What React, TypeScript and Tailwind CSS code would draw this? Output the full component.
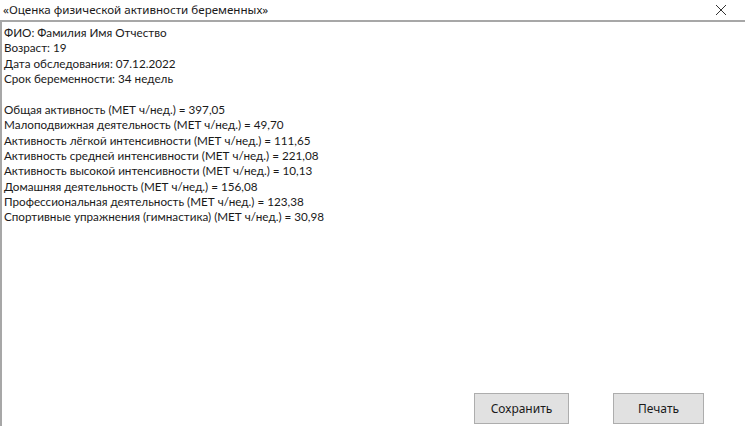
import React from "react";

const info = [
  "ФИО: Фамилия Имя Отчество",
  "Возраст: 19",
  "Дата обследования: 07.12.2022",
  "Срок беременности: 34 недель",
];

const results = [
  "Общая активность (МЕТ ч/нед.) = 397,05",
  "Малоподвижная деятельность (МЕТ ч/нед.) = 49,70",
  "Активность лёгкой интенсивности (МЕТ ч/нед.) = 111,65",
  "Активность средней интенсивности (МЕТ ч/нед.) = 221,08",
  "Активность высокой интенсивности (МЕТ ч/нед.) = 10,13",
  "Домашняя деятельность (МЕТ ч/нед.) = 156,08",
  "Профессиональная деятельность (МЕТ ч/нед.) = 123,38",
  "Спортивные упражнения (гимнастика) (МЕТ ч/нед.) = 30,98",
];

export default function App() {
  return (
    <div className="w-[745px] h-[426px] bg-white flex flex-col text-[#1a1a1a] font-['Noto_Sans',sans-serif] overflow-hidden">
      <div className="h-[22px] flex items-center justify-between pl-[3px] pr-[18px] border-b-2 border-[#a7a7a7] text-[11.6px]">
        <span>«Оценка физической активности беременных»</span>
        <svg width="12" height="12" viewBox="0 0 12 12" className="text-[#333]">
          <path d="M1 1L11 11M11 1L1 11" stroke="currentColor" strokeWidth="1" />
        </svg>
      </div>
      <div className="flex-1 flex flex-col border-l-2 border-[#a7a7a7]">
        <div className="flex-1 pl-[2px] pt-[3px] leading-[15.3px] text-[11.7px] font-['Lato',sans-serif]">
          {info.map((t) => (
            <div key={t}>{t}</div>
          ))}
          <div className="h-[16px]" />
          {results.map((t) => (
            <div key={t}>{t}</div>
          ))}
        </div>
        <div className="flex justify-end gap-[44px] pr-[41px] pb-[2px]">
          <button className="w-[95px] h-[31px] bg-[#e1e1e1] border border-[#adadad] text-[12px]">Сохранить</button>
          <button className="w-[91px] h-[31px] bg-[#e1e1e1] border border-[#adadad] text-[12px]">Печать</button>
        </div>
      </div>
    </div>
  );
}
